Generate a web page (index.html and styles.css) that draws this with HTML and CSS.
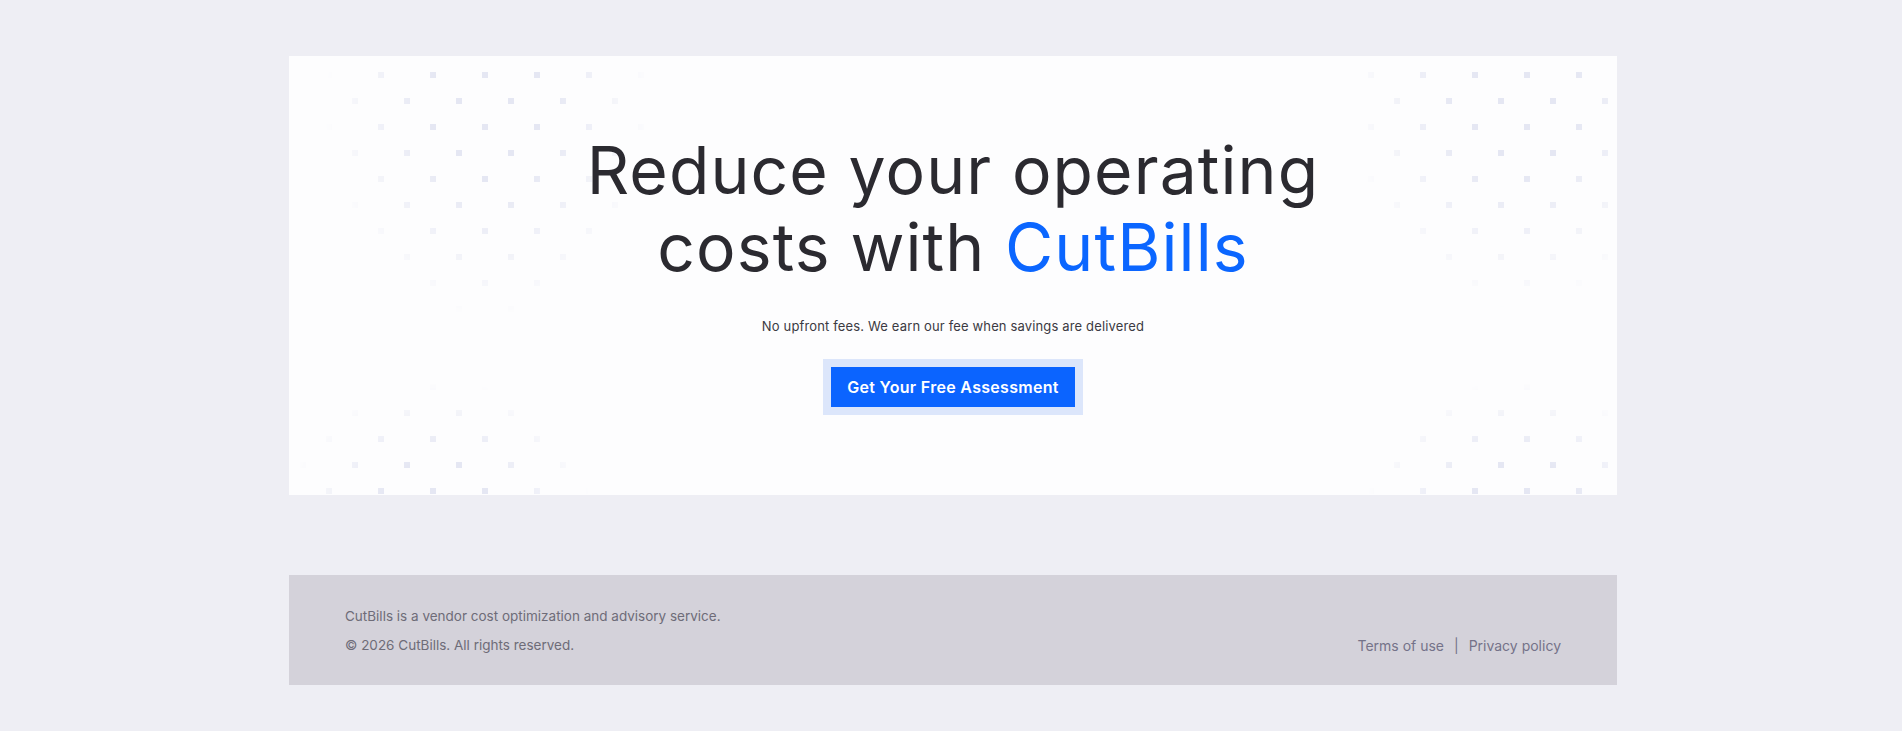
FILE: index.html
```html
<!DOCTYPE html>
<html>
<head>
    <title>CutBills - Reduce your operating costs</title>
    <link rel="stylesheet" href="styles.css">
</head>
<body>
    <main class="page">
        <section class="hero">
            <h1 class="hero-title">Reduce your operating<br>costs with <span class="brand">CutBills</span></h1>
            <p class="hero-sub">No upfront fees. We earn our fee when savings are delivered</p>
            <div class="cta-ring">
                <a class="cta" href="#assessment">Get Your Free Assessment</a>
            </div>
        </section>

        <footer class="site-footer">
            <div class="footer-info">
                <p>CutBills is a vendor cost optimization and advisory service.</p>
                <p>&copy; 2026 CutBills. All rights reserved.</p>
            </div>
            <nav class="footer-links">
                <a href="#terms">Terms of use</a>
                <span class="sep">|</span>
                <a href="#privacy">Privacy policy</a>
            </nav>
        </footer>
    </main>
</body>
</html>
```

FILE: styles.css
```css
body {
    margin: 0;
    background-color: #eeeef4;
    font-family: Inter, "Open Sans", Arial, sans-serif;
}
.page {
    width: 1328px;
    margin-left: calc(50% - 662px);
    padding-top: 56px;
}

/* hero card */
.hero {
    position: relative;
    overflow: hidden;
    display: flex;
    flex-direction: column;
    align-items: center;
    padding: 76px 0 80px;
    background-color: #fdfdfe;
    text-align: center;
}
.hero > * {
    position: relative;
    z-index: 1;
}

/* dotted corners, faded out with masks */
.hero::before,
.hero::after {
    content: "";
    position: absolute;
    top: 0;
    bottom: 0;
    width: 400px;
    background-image:
        conic-gradient(from 270deg at 6px 6px, #e5e7f3 25%, transparent 0),
        conic-gradient(from 270deg at 6px 6px, #e5e7f3 25%, transparent 0);
    background-size: 52px 52px;
}
.hero::before {
    left: 0;
    background-position: 37px 16px, 11px 42px;
    -webkit-mask-image:
        radial-gradient(ellipse 165px 210px at 200px 54px, #000 35%, transparent 100%),
        radial-gradient(ellipse 150px 120px at 151px 444px, #000 35%, transparent 100%);
    mask-image:
        radial-gradient(ellipse 165px 210px at 200px 54px, #000 35%, transparent 100%),
        radial-gradient(ellipse 150px 120px at 151px 444px, #000 35%, transparent 100%);
}
.hero::after {
    right: 0;
    background-position: 47px 16px, 21px 42px;
    -webkit-mask-image:
        radial-gradient(ellipse 170px 210px at 300px 44px, #000 35%, transparent 100%),
        radial-gradient(ellipse 150px 120px at 300px 444px, #000 35%, transparent 100%);
    mask-image:
        radial-gradient(ellipse 170px 210px at 300px 44px, #000 35%, transparent 100%),
        radial-gradient(ellipse 150px 120px at 300px 444px, #000 35%, transparent 100%);
}

.hero-title {
    margin: 0;
    font-size: 66px;
    line-height: 77px;
    font-weight: 400;
    letter-spacing: 1.1px;
    color: #2b2a30;
}
.brand {
    color: #0b66ff;
}
.hero-sub {
    margin: 30px 0 0;
    font-size: 13px;
    line-height: 20px;
    letter-spacing: 0.15px;
    color: #3b3a42;
}
.cta-ring {
    margin-top: 23px;
    padding: 8px;
    background-color: #dce6fb;
}
.cta {
    display: block;
    height: 40px;
    padding: 0 16px;
    line-height: 40px;
    font-size: 16px;
    font-weight: 600;
    letter-spacing: 0.3px;
    color: #fff;
    text-decoration: none;
    background-color: #0b64ff;
}

/* footer */
.site-footer {
    display: flex;
    justify-content: space-between;
    align-items: flex-end;
    margin-top: 80px;
    padding: 27px 56px 25px;
    background-color: #d4d2da;
    font-size: 13.5px;
    line-height: 29px;
}
.footer-info p {
    margin: 0;
    color: #6e6c78;
}
.footer-links {
    display: flex;
    gap: 10px;
    font-size: 14px;
    color: #747289;
}
.footer-links a {
    color: #747289;
    text-decoration: none;
}
```
